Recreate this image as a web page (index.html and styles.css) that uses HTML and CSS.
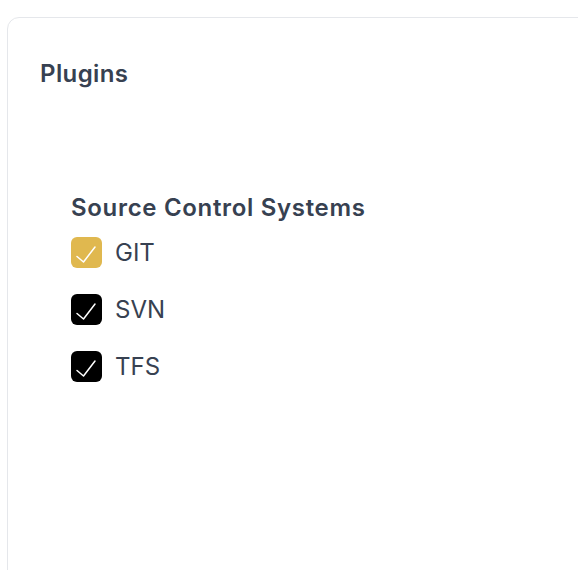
FILE: index.html
```html
<!DOCTYPE html>
<html lang="en">
<head>
<meta charset="utf-8">
<title>Plugins</title>
<link rel="stylesheet" href="styles.css">
</head>
<body>
<div class="page">
  <section class="card">
    <h2 class="card-title">Plugins</h2>
    <div class="group">
      <h3 class="group-title">Source Control Systems</h3>
      <ul class="options">
        <li class="option">
          <span class="box box-gold"><svg viewBox="0 0 31 31" width="31" height="31"><polyline points="6,19.5 12.5,25 24,10" fill="none" stroke="#fff" stroke-width="1.5" stroke-linecap="round" stroke-linejoin="round"/></svg></span>
          <span class="label">GIT</span>
        </li>
        <li class="option">
          <span class="box box-black"><svg viewBox="0 0 31 31" width="31" height="31"><polyline points="6,19.5 12.5,25 24,10" fill="none" stroke="#fff" stroke-width="1.5" stroke-linecap="round" stroke-linejoin="round"/></svg></span>
          <span class="label">SVN</span>
        </li>
        <li class="option">
          <span class="box box-black"><svg viewBox="0 0 31 31" width="31" height="31"><polyline points="6,19.5 12.5,25 24,10" fill="none" stroke="#fff" stroke-width="1.5" stroke-linecap="round" stroke-linejoin="round"/></svg></span>
          <span class="label">TFS</span>
        </li>
      </ul>
    </div>
  </section>
</div>
</body>
</html>
```

FILE: styles.css
```css
html, body {
  margin: 0;
  padding: 0;
  background: #ffffff;
  overflow: hidden;
}

body {
  font-family: Inter, "Noto Sans", "Liberation Sans", sans-serif;
  color: #374151;
}

.page {
  padding: 17px 0 0 7px;
  height: 570px;
  box-sizing: border-box;
  overflow: hidden;
}

.card {
  width: 620px;
  min-height: 600px;
  border: 1px solid #e5e7eb;
  border-radius: 12px;
  box-sizing: border-box;
  padding: 40px 0 0 32px;
}

.card-title {
  margin: 0;
  font-size: 24px;
  line-height: 32px;
  font-weight: 600;
  letter-spacing: 0.4px;
  color: #374151;
}

.group {
  margin: 102px 0 0 31px;
}

.group-title {
  margin: 0;
  font-size: 24px;
  line-height: 32px;
  font-weight: 600;
  letter-spacing: 0.68px;
  color: #374151;
}

.options {
  list-style: none;
  margin: 13px 0 0 0;
  padding: 0;
  display: flex;
  flex-direction: column;
  gap: 26px;
}

.option {
  display: flex;
  align-items: center;
  gap: 13px;
  height: 31px;
}

.box {
  width: 31px;
  height: 31px;
  border-radius: 6px;
  display: flex;
  flex: none;
}

.box svg {
  display: block;
}

.box-gold {
  background: #e0b84f;
}

.box-black {
  background: #000000;
}

.label {
  font-size: 24px;
  line-height: 31px;
  font-weight: 400;
  color: #374151;
}
```
